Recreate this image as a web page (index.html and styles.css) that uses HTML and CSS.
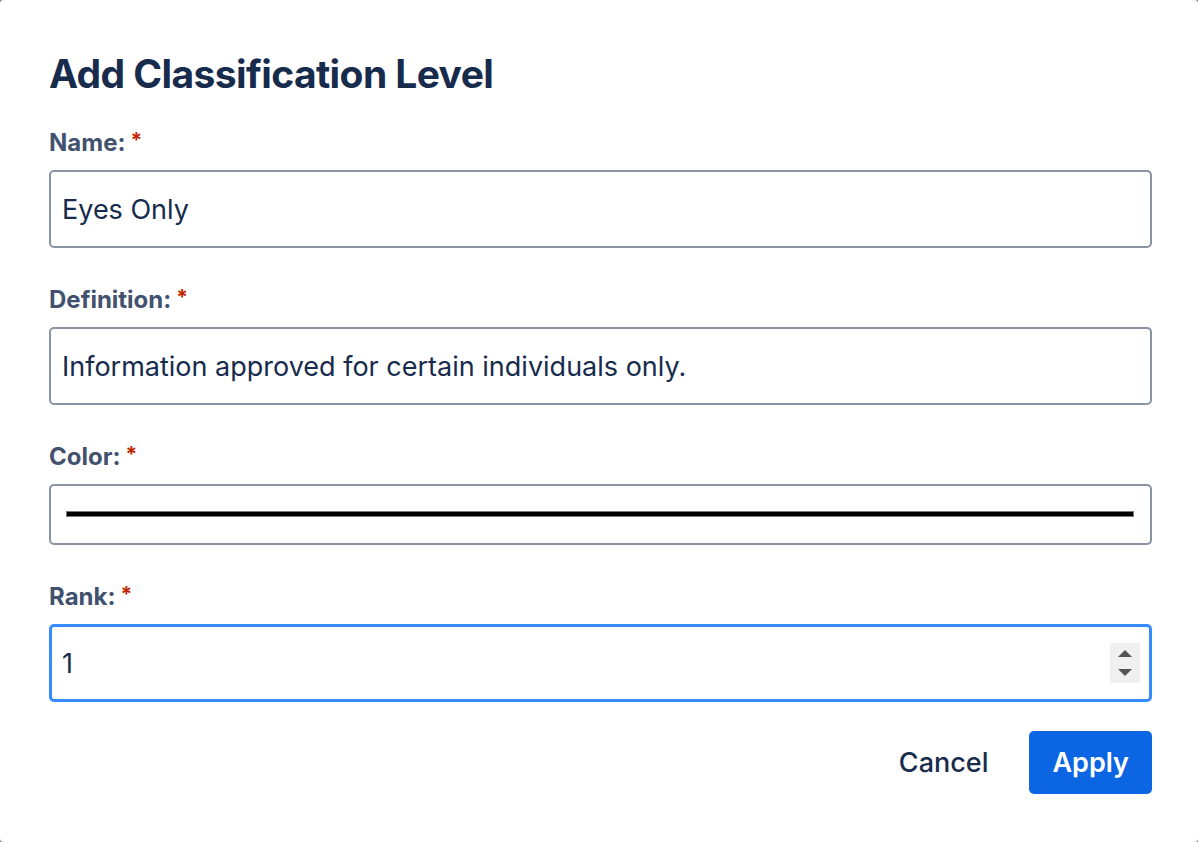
FILE: index.html
```html
<!DOCTYPE html>
<html lang="en">
<head>
<meta charset="utf-8">
<title>Add Classification Level</title>
<link rel="stylesheet" href="styles.css">
</head>
<body>
<div class="dialog">
  <h1 class="title">Add Classification Level</h1>
  <form class="form">
    <div class="field">
      <label class="label">Name:<span class="req">*</span></label>
      <div class="input"><span class="value">Eyes Only</span></div>
    </div>
    <div class="field">
      <label class="label">Definition:<span class="req">*</span></label>
      <div class="input"><span class="value">Information approved for certain individuals only.</span></div>
    </div>
    <div class="field">
      <label class="label">Color:<span class="req">*</span></label>
      <div class="input color"><span class="swatch"></span></div>
    </div>
    <div class="field">
      <label class="label">Rank:<span class="req">*</span></label>
      <div class="input focused"><span class="value">1</span>
        <span class="spinner">
          <svg width="30" height="40" viewBox="0 0 30 40"><path d="M8 14 L15 7 L22 14 Z" fill="#555"/><path d="M8 26 L22 26 L15 33 Z" fill="#555"/></svg>
        </span>
      </div>
    </div>
    <div class="actions">
      <button type="button" class="btn cancel">Cancel</button>
      <button type="button" class="btn apply">Apply</button>
    </div>
  </form>
</div>
</body>
</html>
```

FILE: styles.css
```css
html {
  background: #8993a4;
  height: 100%;
}
body {
  margin: 0;
  height: 100%;
  background: #ffffff;
  border-radius: 4px;
  font-family: Inter, "Noto Sans", sans-serif;
  color: #172b4d;
  overflow: hidden;
}
.dialog {
  padding: 51px 46px 0 49px;
}
.title {
  margin: 0;
  font-size: 39px;
  line-height: 46px;
  font-weight: 700;
  letter-spacing: -0.6px;
  color: #172b4d;
}
.form {
  display: flex;
  flex-direction: column;
  margin-top: 30px;
}
.field {
  display: flex;
  flex-direction: column;
  margin-bottom: 36px;
}
.label {
  font-size: 24px;
  line-height: 32px;
  font-weight: 700;
  color: #42526e;
  margin-bottom: 11px;
  display: flex;
  align-items: flex-start;
}
.req {
  color: #bf2600;
  margin-left: 5px;
  font-size: 21px;
  line-height: 28px;
}
.input {
  box-sizing: border-box;
  height: 78px;
  border: 2px solid #8993a4;
  border-radius: 5px;
  background: #fff;
  display: flex;
  align-items: center;
  padding: 0 10px 0 11px;
  font-size: 27px;
  color: #172b4d;
}
.value {
  flex: 1;
}
.input.color {
  height: 61px;
  padding: 0 16px 0 15px;
}
.swatch {
  flex: 1;
  height: 6px;
  background: #000;
  border: 1.5px solid #7a7a7a;
  box-sizing: border-box;
  margin-top: -2px;
}
.input.focused {
  border: 3px solid #388bff;
  padding-left: 10px;
  padding-right: 9px;
}
.spinner {
  width: 30px;
  height: 40px;
  background: #f0f0f0;
  display: flex;
}
.actions {
  display: flex;
  justify-content: flex-end;
  gap: 20px;
  margin-top: -7px;
}
.btn {
  font-family: Inter, "Noto Sans", sans-serif;
  font-size: 27px;
  font-weight: 500;
  height: 63px;
  border: none;
  border-radius: 5px;
  padding: 0 21px;
  cursor: pointer;
}
.cancel {
  background: transparent;
  color: #172b4d;
}
.apply {
  background: #0c66e4;
  color: #fff;
  font-weight: 600;
  padding: 0 23px;
}
```
